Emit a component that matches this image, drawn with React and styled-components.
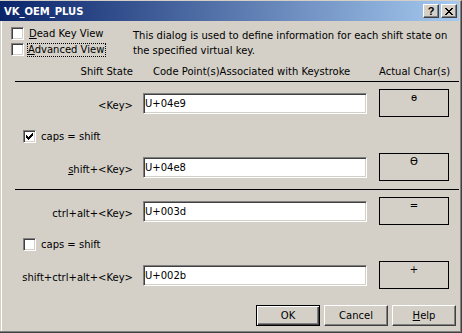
import React from 'react'
import styled, { createGlobalStyle } from 'styled-components'

const GlobalStyle = createGlobalStyle`
    html, body {
        margin: 0;
        padding: 0;
        background: #d4d0c8;
    }
    body {
        font-family: "DejaVu Sans", "Liberation Sans", sans-serif;
        font-size: 10px;
        color: #000;
    }
`

const Frame = styled.div`
    width: 462px;
    height: 333px;
    box-sizing: border-box;
    background: #d4d0c8;
    border-top: 1px solid #d4d0c8;
    border-right: 1px solid #404040;
    border-bottom: 1px solid #404040;
    box-shadow: inset -1px -1px #808080;
    padding-right: 2px;
    padding-bottom: 1px;
    display: flex;
    flex-direction: column;
`

const TitleBar = styled.div`
    height: 20px;
    flex-shrink: 0;
    display: flex;
    align-items: center;
    padding: 0 2px 0 4px;
    background: linear-gradient(to right, #0a246a, #a6caf0);
`

const Title = styled.span`
    flex: 1;
    color: #fff;
    font-weight: bold;
    font-size: 10px;
`

const CaptionButton = styled.div`
    width: 16px;
    height: 14px;
    box-sizing: border-box;
    margin-left: ${p => p.$gap || 0}px;
    background: #d4d0c8;
    border: 1px solid;
    border-color: #fff #404040 #404040 #fff;
    box-shadow: inset -1px -1px #808080;
    display: flex;
    align-items: center;
    justify-content: center;
    font-family: "Liberation Sans", Arial, sans-serif;
    font-weight: bold;
    font-size: 11px;
    line-height: 1;
`

const Body = styled.div`
    flex: 1;
    border-left: 1px solid #d4d0c8;
    box-shadow: inset 1px 0 #fff;
    display: flex;
    flex-direction: column;
`

const TopSection = styled.div`
    display: flex;
    margin-top: 6px;
    padding-left: 10px;
`

const OptionColumn = styled.div`
    width: 122px;
    display: flex;
    flex-direction: column;
    gap: 3px;
`

const CheckRow = styled.div`
    display: flex;
    align-items: center;
    gap: 5px;
    height: 13px;
    margin: ${p => p.$margin || '0'};
    white-space: nowrap;
`

const Box = styled.div`
    width: 13px;
    height: 13px;
    flex-shrink: 0;
    box-sizing: border-box;
    background: #fff;
    border: 1px solid;
    border-color: #808080 #fff #fff #808080;
    box-shadow: inset 1px 1px #404040, inset -1px -1px #d4d0c8;
    display: flex;
    align-items: center;
    justify-content: center;
`

const Focus = styled.span`
    outline: 1px dotted #000;
    outline-offset: 0;
    padding: 0 1px 0 0;
    margin-left: -1px;
    line-height: 12px;
`

const Description = styled.div`
    margin-top: 1px;
    line-height: 15px;
`

const Main = styled.div`
    margin-left: 14px;
    display: flex;
    flex-direction: column;
`

const Grid = styled.div`
    display: grid;
    grid-template-columns: 118px 224px 72px;
    column-gap: 10px;
    & > :nth-child(3n) { margin-left: 2px; }
`

const Header = styled(Grid)`
    margin-top: 7px;
    padding-bottom: 3px;
    border-bottom: 1px solid #000;
    line-height: 13px;
`

const HeadCell = styled.span`
    text-align: ${p => p.$align || 'left'};
    padding-left: ${p => p.$indent || 0}px;
    white-space: nowrap;
`

const Group = styled.div`
    padding: 7px 0 8px;
    border-bottom: ${p => p.$divider ? '1px solid #000' : 'none'};
`

const Row = styled(Grid)`
    height: 28px;
    align-items: center;
`

const Label = styled.span`
    text-align: right;
    padding-top: 5px;
    white-space: nowrap;
`

const Field = styled.input`
    height: 21px;
    box-sizing: border-box;
    width: 100%;
    margin: 0;
    padding: 0 1px;
    font-family: "DejaVu Sans", "Liberation Sans", sans-serif;
    font-size: 10px;
    color: #000;
    background: #fff;
    border: 1px solid;
    border-color: #808080 #fff #fff #808080;
    box-shadow: inset 1px 1px #404040, inset -1px -1px #d4d0c8;
    outline: none;
`

const CharBox = styled.div`
    height: 28px;
    box-sizing: border-box;
    border: 1px solid #000;
    text-align: center;
    padding-top: 1px;
    line-height: 13px;
`

const U = styled.span`
    text-decoration: underline;
`

const ButtonBar = styled.div`
    display: flex;
    justify-content: flex-end;
    gap: 4px;
    margin: 8px 3px 0 0;
`

const Button = styled.button`
    width: 64px;
    height: 21px;
    box-sizing: border-box;
    margin: 0;
    padding: 0;
    font-family: "DejaVu Sans", "Liberation Sans", sans-serif;
    font-size: 10px;
    color: #000;
    background: #d4d0c8;
    border: 1px solid;
    border-color: ${p => p.$default ? '#000' : '#fff #404040 #404040 #fff'};
    box-shadow: ${p => p.$default
        ? 'inset 1px 1px #fff, inset -1px -1px #404040, inset -2px -2px #808080'
        : 'inset -1px -1px #808080'};
`

const Check = () => (
    <svg width="7" height="7" viewBox="0 0 7 7" shapeRendering="crispEdges">
        <path d="M6 0h1v3h-1v1h-1v1h-1v1h-1v1h-1v-1h-1v-1h-1v-3h1v1h1v1h1v-1h1v-1h1z" fill="#000" />
    </svg>
)

const CloseGlyph = () => (
    <svg width="8" height="7" viewBox="0 0 8 7" shapeRendering="crispEdges">
        <path d="M0 0h2v1h1v1h2v-1h1v-1h2v1h-1v1h-1v1h-1v1h1v1h1v1h1v1h-2v-1h-1v-1h-2v1h-1v1h-2v-1h1v-1h1v-1h1v-1h-1v-1h-1v-1h-1z" fill="#000" />
    </svg>
)

const Checkbox = ({ checked, children, margin }) => (
    <CheckRow $margin={margin}>
        <Box>{checked && <Check />}</Box>
        {children}
    </CheckRow>
)

const rows = [
    { label: '<Key>', code: 'U+04e9', char: '\u04e9' },
    { label: <><U>s</U>hift+&lt;Key&gt;</>, code: 'U+04e8', char: '\u04e8' },
    { label: 'ctrl+alt+<Key>', code: 'U+003d', char: '=' },
    { label: 'shift+ctrl+alt+<Key>', code: 'U+002b', char: '+' },
]

const KeyRow = ({ row }) => (
    <Row>
        <Label>{row.label}</Label>
        <Field readOnly value={row.code} />
        <CharBox>{row.char}</CharBox>
    </Row>
)

const App = () => {
    return (
        <Frame>
            <GlobalStyle />
            <TitleBar>
                <Title>VK_OEM_PLUS</Title>
                <CaptionButton>?</CaptionButton>
                <CaptionButton $gap={2}><CloseGlyph /></CaptionButton>
            </TitleBar>
            <Body>
                <TopSection>
                    <OptionColumn>
                        <Checkbox><span><U>D</U>ead Key View</span></Checkbox>
                        <Checkbox><Focus><U>A</U>dvanced View</Focus></Checkbox>
                    </OptionColumn>
                    <Description>
                        This dialog is used to define information for each shift state on<br />
                        the specified virtual key.
                    </Description>
                </TopSection>
                <Main>
                    <Header>
                        <HeadCell $align="right">Shift State</HeadCell>
                        <HeadCell $indent={10}>Code Point(s)Associated with Keystroke</HeadCell>
                        <HeadCell $align="center">Actual Char(s)</HeadCell>
                    </Header>
                    <Group $divider>
                        <KeyRow row={rows[0]} />
                        <Checkbox checked margin="13px 0 10px 8px">caps = shift</Checkbox>
                        <KeyRow row={rows[1]} />
                    </Group>
                    <Group>
                        <KeyRow row={rows[2]} />
                        <Checkbox margin="13px 0 10px 8px">caps = shift</Checkbox>
                        <KeyRow row={rows[3]} />
                    </Group>
                </Main>
                <ButtonBar>
                    <Button $default>OK</Button>
                    <Button>Cancel</Button>
                    <Button><U>H</U>elp</Button>
                </ButtonBar>
            </Body>
        </Frame>
    )
}

export default App
